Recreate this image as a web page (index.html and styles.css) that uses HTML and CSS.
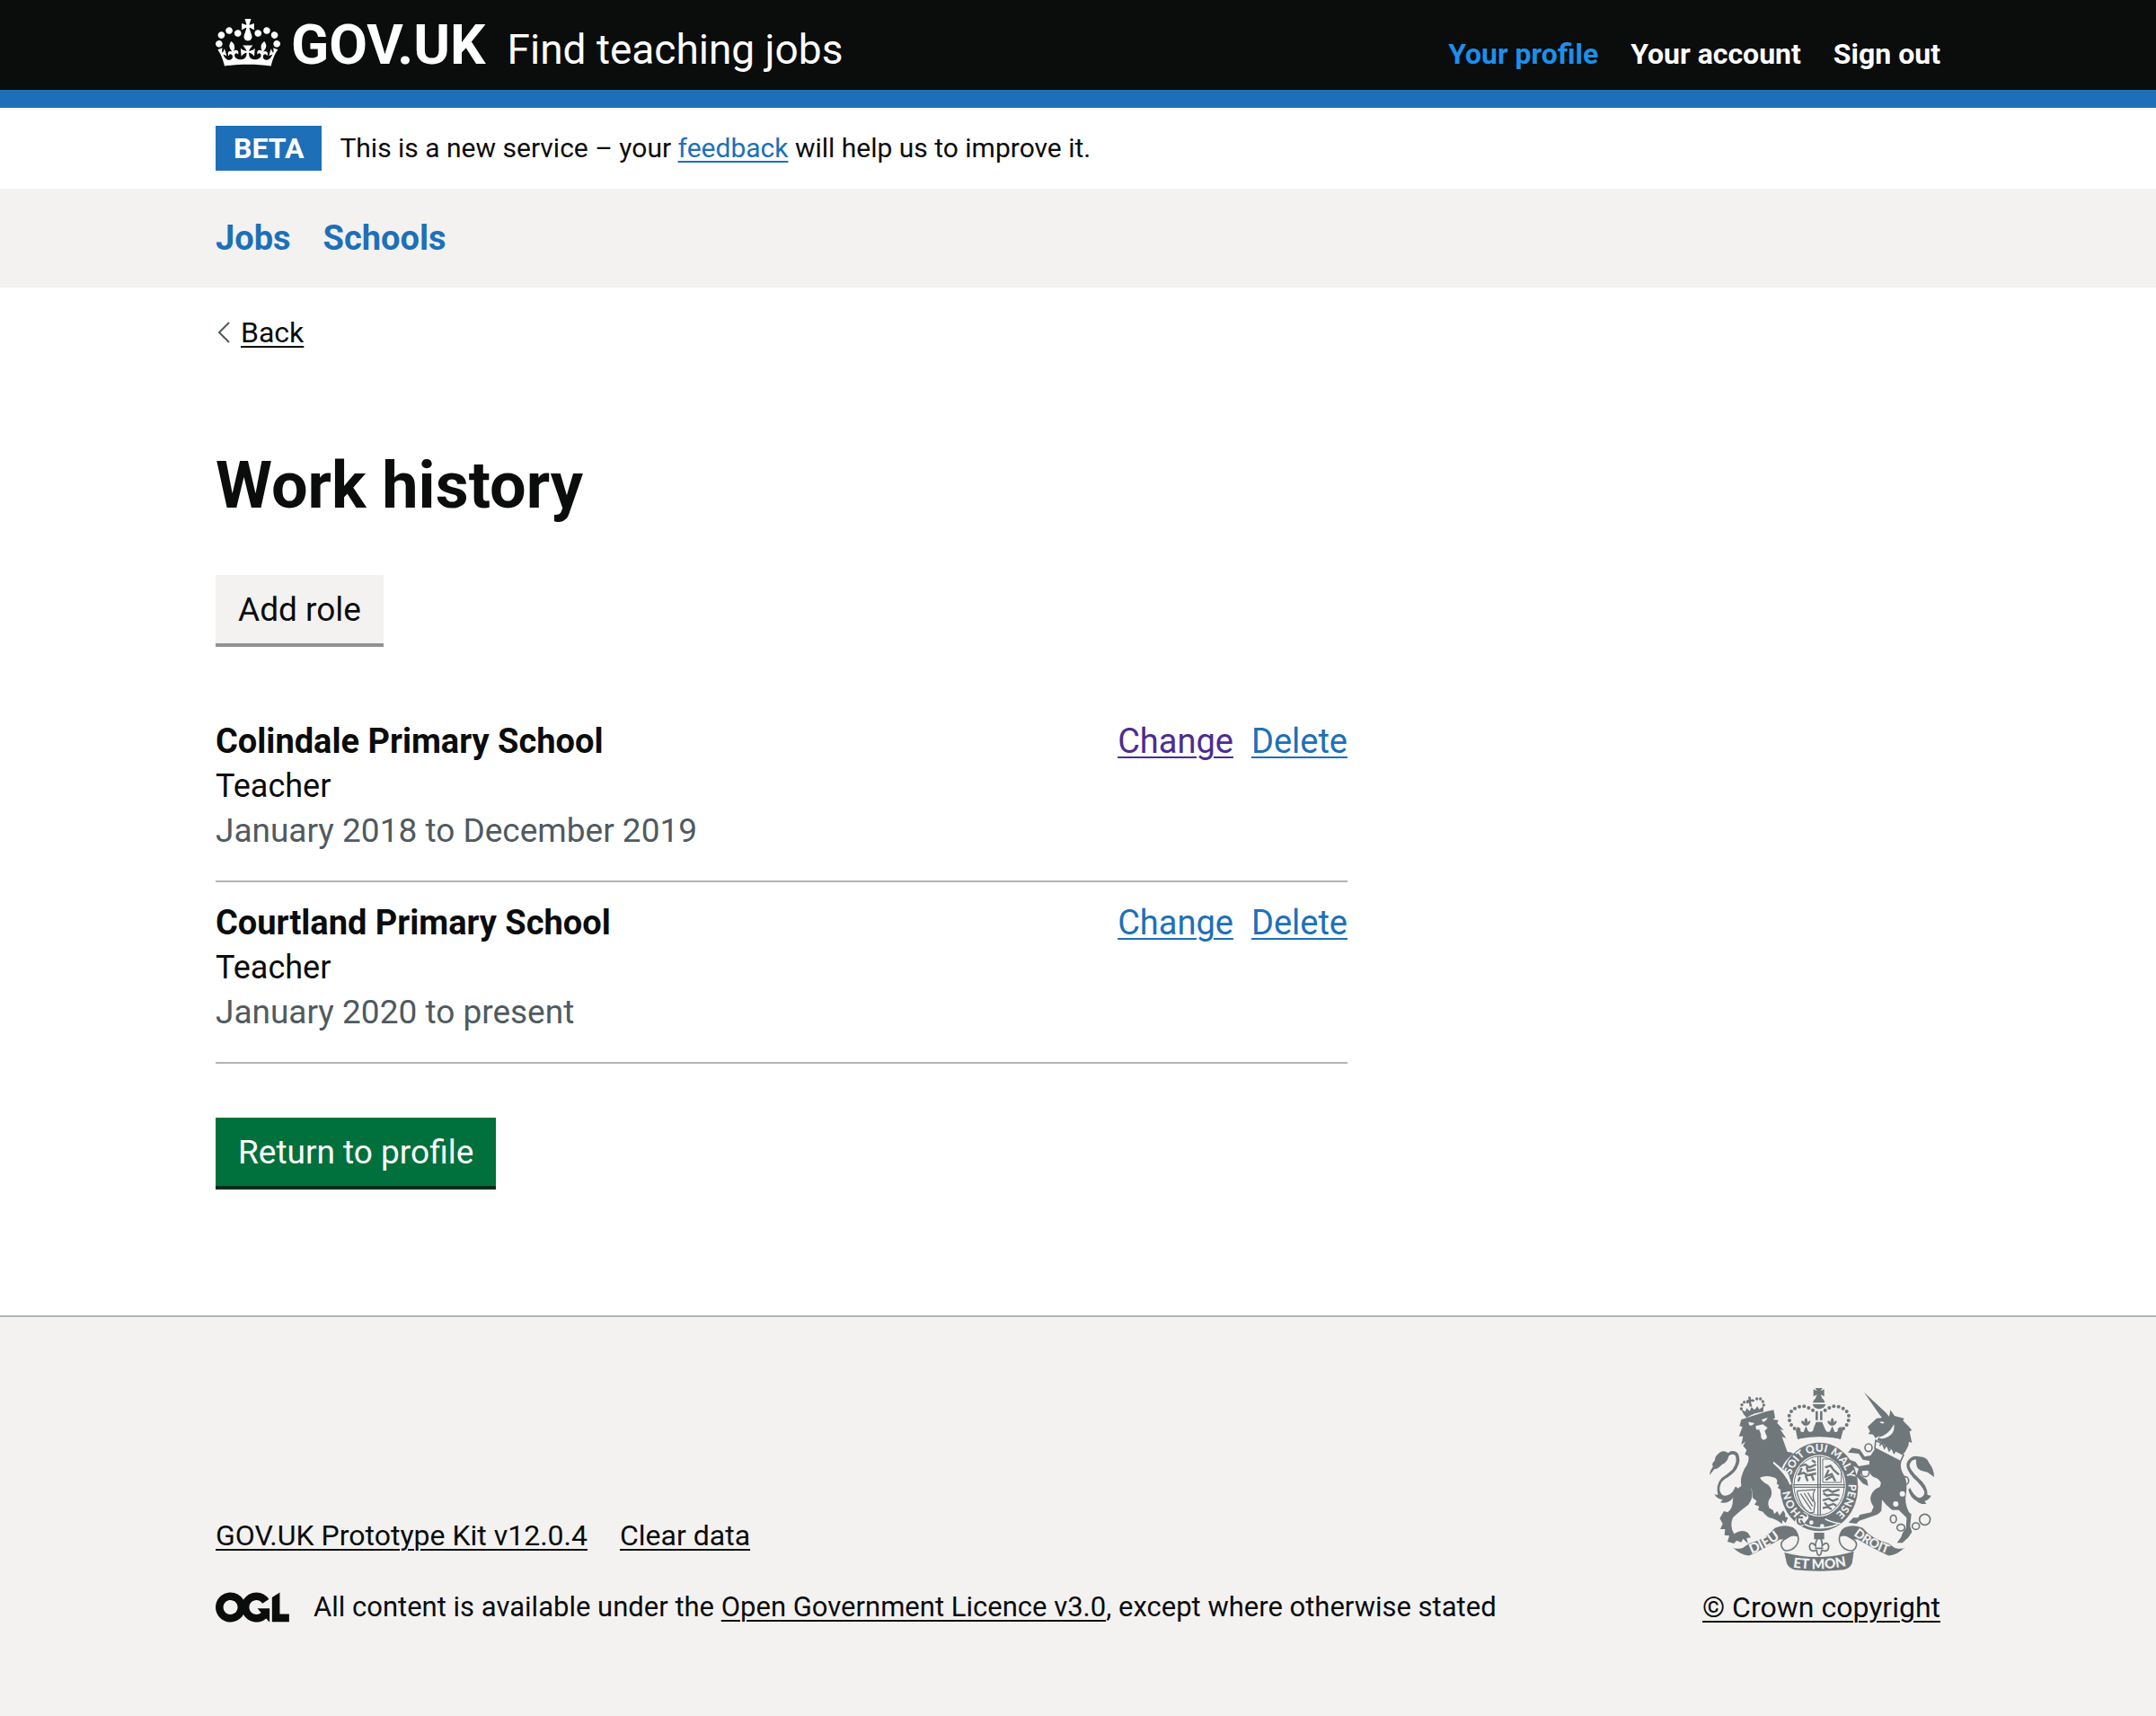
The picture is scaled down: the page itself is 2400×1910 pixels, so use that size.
FILE: index.html
```html
<!DOCTYPE html>
<html lang="en">
<head>
<meta charset="utf-8">
<meta name="viewport" content="width=device-width, initial-scale=1">
<title>Work history - Find teaching jobs - GOV.UK</title>
<link rel="stylesheet" href="styles.css">
</head>
<body>
<header class="header">
  <div class="container header-row">
    <div class="brand">
      <a class="logo" href="#">
        <svg class="crown" viewBox="0 0 132 97" aria-hidden="true"><path fill="currentColor" fill-rule="evenodd" d="M25 30.2c3.5 1.5 7.7-.2 9.1-3.7 1.5-3.6-.2-7.8-3.9-9.2-3.6-1.4-7.6.3-9.1 3.9-1.4 3.5.3 7.5 3.9 9zM9 39.5c3.6 1.5 7.8-.2 9.2-3.7 1.5-3.6-.2-7.8-3.9-9.1-3.6-1.5-7.6.2-9.1 3.8-1.4 3.5.3 7.5 3.8 9zM4.4 57.2c3.5 1.5 7.7-.2 9.1-3.8 1.5-3.6-.2-7.7-3.9-9.1-3.5-1.5-7.6.3-9.1 3.8-1.4 3.5.3 7.6 3.9 9.1zm38.3-21.4c3.5 1.5 7.7-.2 9.1-3.8 1.5-3.6-.2-7.7-3.9-9.1-3.6-1.5-7.6.3-9.1 3.8-1.3 3.6.4 7.7 3.9 9.1zm64.4-5.6c-3.6 1.5-7.8-.2-9.1-3.7-1.5-3.6.2-7.8 3.8-9.2 3.6-1.4 7.7.3 9.2 3.9 1.3 3.5-.4 7.5-3.9 9zm15.9 9.3c-3.6 1.5-7.7-.2-9.1-3.7-1.5-3.6.2-7.8 3.7-9.1 3.6-1.5 7.7.2 9.2 3.8 1.5 3.5-.3 7.5-3.8 9zm4.7 17.7c-3.6 1.5-7.8-.2-9.2-3.8-1.5-3.6.2-7.7 3.9-9.1 3.6-1.5 7.7.3 9.2 3.8 1.3 3.5-.4 7.6-3.9 9.1zM89.3 35.8c-3.6 1.5-7.8-.2-9.2-3.8-1.4-3.6.2-7.7 3.9-9.1 3.6-1.5 7.7.3 9.2 3.8 1.4 3.6-.3 7.7-3.9 9.1zM69.7 17.7l8.9 4.7V9.3l-8.9 2.8c-.2-.3-.5-.6-.9-.9L72.4 0H59.6l3.5 11.2c-.3.3-.6.5-.9.9l-8.8-2.8v13.1l8.8-4.7c.3.3.6.7.9.9l-5 15.4v.1c-.2.8-.4 1.6-.4 2.4 0 4.1 3.1 7.5 7 8.1h.2c.3 0 .7.1 1 .1.4 0 .7 0 1-.1h.2c4-.6 7.1-4.1 7.1-8.1 0-.8-.1-1.7-.4-2.4V34l-5.1-15.4c.4-.2.7-.6 1-.9zM66 92.8c16.9 0 32.8 1.1 47.1 3.2 4-16.9 8.9-26.7 14-33.5l-9.6-3.4c1 4.9 1.1 7.2 0 10.2-1.5-1.4-3-4.3-4.2-8.7L108.6 76c2.8-2 5-3.2 7.5-3.3-4.4 9.4-10 11.9-13.6 11.2-4.3-.8-6.3-4.6-5.6-7.9 1-4.7 5.7-5.9 8-.5 4.3-8.7-3-11.4-7.6-8.8 7.1-7.2 7.9-13.5 2.1-21.1-8 6.1-8.1 12.3-4.5 20.8-4.7-5.4-12.1-2.5-9.5 6.2 3.4-5.2 7.9-2 7.2 3.1-.6 4.3-6.4 7.8-13.5 7.2-10.3-.9-10.9-8-11.2-13.8 2.5-.5 7.1 1.8 11 7.3L80.2 60c-4.1 4.4-8 5.3-12.3 5.4 1.4-4.4 8-11.6 8-11.6H55.5s6.4 7.2 7.9 11.6c-4.2-.1-8-1-12.3-5.4l1.4 16.4c3.9-5.5 8.5-7.7 10.9-7.3-.3 5.8-.9 12.8-11.1 13.8-7.2.6-12.9-2.9-13.5-7.2-.7-5 3.8-8.3 7.1-3.1 2.7-8.7-4.6-11.6-9.4-6.2 3.7-8.5 3.6-14.7-4.6-20.8-5.8 7.6-5 13.9 2.2 21.1-4.7-2.6-11.9.1-7.7 8.8 2.3-5.5 7.1-4.2 8.1.5.7 3.3-1.3 7.1-5.7 7.9-3.5.7-9-1.8-13.5-11.2 2.5.1 4.7 1.3 7.5 3.3l-4.7-15.4c-1.2 4.4-2.7 7.2-4.3 8.7-1.1-3-.9-5.3 0-10.2l-9.5 3.4c5 6.9 9.9 16.7 14 33.5 14.8-2.1 30.8-3.2 47.7-3.2z"/></svg>
        <span class="logo-text">GOV.UK</span>
      </a>
      <a class="service-name" href="#">Find teaching jobs</a>
    </div>
    <nav class="account-nav" aria-label="Account">
      <a class="is-active" href="#">Your profile</a>
      <a href="#">Your account</a>
      <a href="#">Sign out</a>
    </nav>
  </div>
</header>

<div class="container phase">
  <strong class="tag">BETA</strong>
  <span>This is a new service – your <a class="link" href="#">feedback</a> will help us to improve it.</span>
</div>

<nav class="primary-nav" aria-label="Primary">
  <div class="container primary-nav-row">
    <a href="#">Jobs</a>
    <a href="#">Schools</a>
  </div>
</nav>

<div class="container">
  <a class="back" href="#">
    <svg class="chevron" viewBox="0 0 14 24" aria-hidden="true"><path d="M13 1 2 12l11 11" fill="none" stroke="currentColor" stroke-width="2"/></svg>
    <span>Back</span>
  </a>
  <main class="main">
    <h1 class="title">Work history</h1>
    <button class="button button-secondary" type="button">Add role</button>
    <section class="roles" aria-label="Roles">
      <article class="role">
        <div>
          <h2 class="role-school">Colindale Primary School</h2>
          <p>Teacher</p>
          <p class="role-dates">January 2018 to December 2019</p>
        </div>
        <div class="role-actions">
          <a class="link link-visited" href="#">Change</a>
          <a class="link" href="#">Delete</a>
        </div>
      </article>
      <article class="role">
        <div>
          <h2 class="role-school">Courtland Primary School</h2>
          <p>Teacher</p>
          <p class="role-dates">January 2020 to present</p>
        </div>
        <div class="role-actions">
          <a class="link" href="#">Change</a>
          <a class="link" href="#">Delete</a>
        </div>
      </article>
    </section>
    <button class="button" type="button">Return to profile</button>
  </main>
</div>

<footer class="footer">
  <div class="container footer-row">
    <div class="footer-meta">
      <div class="footer-links">
        <a href="#">GOV.UK Prototype Kit v12.0.4</a>
        <a href="#">Clear data</a>
      </div>
      <div class="licence">
        <svg class="ogl" viewBox="0 0 484 196" role="img" aria-label="Open Government Licence"><path fill="currentColor" d="M421.500 142.800V.1l-50.700 32.300v161.100h112.400v-50.700zm-122.300-9.600A47.120 47.120 0 0 1 221 97.800c0-26 21.100-47.100 47.100-47.100 16.700 0 31.400 8.700 39.700 21.800l42.700-27.200A97.630 97.630 0 0 0 268.100 0c-36.500 0-68.300 20.100-85.100 49.700A98 98 0 0 0 97.800 0C43.900 0 0 43.900 0 97.800s43.900 97.800 97.800 97.800c36.500 0 68.300-20.100 85.100-49.700a97.760 97.760 0 0 0 149.600 25.400l19.400 22.200h3v-87.800h-80l24.300 27.500zM97.800 145c-26 0-47.100-21.100-47.100-47.100s21.100-47.100 47.100-47.100 47.100 21.100 47.100 47.100S123.800 145 97.800 145"/></svg>
        <span>All content is available under the <a href="#">Open Government Licence v3.0</a>, except where otherwise stated</span>
      </div>
    </div>
    <a class="copyright" href="#">
      <svg class="crest" viewBox="72 76 750 618" aria-hidden="true">
        <defs>
          <path id="garter" d="M438 519A98 114 0 0 1 438 291A98 114 0 0 1 438 519"/>
          <path id="scroll-left" d="M212 633Q268 612 318 571"/>
          <path id="scroll-mid" d="M350 677Q438 691 528 673"/>
          <path id="scroll-right" d="M552 569Q604 612 672 634"/>
        </defs>
        <g fill="currentColor">
          <!-- lion tail -->
          <path d="M72 370Q74 352 84 340Q76 336 90 320Q88 308 108 293Q122 286 134 296Q148 282 166 296Q180 320 162 350Q150 368 124 382Q104 396 106 420Q112 444 134 436Q150 430 158 408L166 412Q162 438 146 450Q132 466 108 461L116 452Q98 450 88 434L100 436Q92 402 112 380Q132 366 148 352Q168 324 158 304Q146 296 136 306Q132 326 114 334Q100 350 88 350Z"/>
          <!-- lion body -->
          <path d="M178 184L262 157L286 152L291 178L284 184L302 186L298 196L320 220L308 217L328 246L314 242L332 292Q345 292 352 298Q322 322 314 345Q340 372 349 404L349 436L340 430L334 440L326 432L312 436L318 424L300 412L304 404L296 398Q302 384 290 378Q262 368 240 378Q248 392 268 402Q286 420 276 444Q262 458 272 480L284 486L288 500L298 490L306 504L318 488Q328 500 324 508L334 512L326 530L316 520L314 532L300 522L282 514Q262 510 250 492L234 486L238 474L222 468L230 456L216 446Q216 420 210 412Q222 442 202 468Q160 500 150 512Q138 540 154 566Q180 548 200 562L210 578L196 580L200 598L184 582L178 594L162 588L154 598L132 592L138 572L122 570L124 550L108 550L116 532L106 514L120 490L132 494Q150 482 150 450Q154 420 178 406Q172 380 190 346Q206 324 202 306L190 300L196 286L184 272L192 258L178 268L184 240L170 240L182 208L172 206Z"/>
          <!-- lion crown -->
          <path d="M186 167L178 150L192 158L196 146L206 156L212 142L222 152L232 140L238 150L252 140L252 158Q220 162 196 178Z"/>
          <circle cx="178" cy="148" r="5"/><circle cx="180" cy="135" r="5"/><circle cx="188" cy="126" r="5"/><circle cx="199" cy="127" r="4"/><circle cx="218" cy="121" r="4"/><circle cx="230" cy="115" r="5"/><circle cx="242" cy="115" r="5"/><circle cx="250" cy="124" r="5"/><circle cx="253" cy="136" r="5"/>
          <path d="M201 107l9 2 0 8 8-1-2 9-6-1 4 16-8 2-2-15-8 1-1-8 8-3Z"/>
          <!-- centre crown -->
          <path d="M425 79h24l-6 10 12-6v24l-12-6 6 14h-24l6-14-12 6V83l12 6ZM437 110q18 2 20 18h-40q4-16 20-18ZM416 133h44q-4 14-22 16-18-2-22-16ZM426 156h8v30h-8zM441 156h8v30h-8zM360 220L366 208L376 214Q372 228 386 226L394 206L402 224Q418 230 420 212L424 202L428 192H448L452 202L456 212Q462 230 474 224L482 206L490 226Q504 228 500 214L510 208L518 220L510 250Q438 236 366 250Z"/>
          <path d="M388 204q-14-10-8-16 8 0 10 8-4-10 4-18 8 8 4 18 4-8 10-8 4 8-10 16ZM476 204q-14-10-8-16 8 0 10 8-4-10 4-18 8 8 4 18 4-8 10-8 4 8-10 16Z"/>
          <g id="pearls"><circle cx="356" cy="214" r="6"/><circle cx="345" cy="202" r="6"/><circle cx="339" cy="187" r="6"/><circle cx="338" cy="171" r="6"/><circle cx="345" cy="157" r="6"/><circle cx="357" cy="147" r="6"/><circle cx="372" cy="141" r="6"/><circle cx="388" cy="140" r="6"/><circle cx="403" cy="145" r="6"/><circle cx="417" cy="153" r="6"/></g>
          <use href="#pearls" transform="matrix(-1 0 0 1 875 0)"/>
          <!-- unicorn -->
          <path d="M588 93L660 160L672 174L676 152L690 172L722 180L718 188L738 208L748 220L740 224L748 262L738 258L736 272L724 294L716 300L632 252L640 238L626 246L618 234L602 232L608 224L600 208L630 180L648 178L640 168Z"/>
          <path d="M626 280L712 326Q706 350 724 374Q734 400 728 434Q722 462 738 494L746 500L742 540L748 560L736 578L716 596H698L712 576Q718 556 728 548L730 512L704 486L682 486Q660 470 648 452L646 488Q640 500 624 504L572 522L562 532L536 528L552 512L568 512L574 502L612 494L620 476Q604 452 612 436Q620 416 640 410Q652 392 630 380Q606 372 606 354L580 356L576 370L598 386L602 406L584 398L562 372L570 348L548 336L540 318L560 326L570 340L606 334L606 322L584 318L570 298L534 294L548 278L574 284L590 308L610 304Z"/>
          <!-- unicorn tail -->
          <path d="M822 376Q822 350 806 330Q798 308 772 308Q742 300 730 332Q728 352 752 378Q782 404 790 426Q790 442 772 446Q754 440 742 412L736 418Q742 446 764 456Q774 468 796 466L790 456Q806 452 812 438L800 436Q800 404 770 380Q738 348 740 336Q746 316 762 318Q760 348 778 354L800 360Z"/>
          <!-- garter -->
          <ellipse cx="438" cy="409" rx="130" ry="148"/>
          <!-- motto scroll -->
          <path d="M148 610Q160 620 184 612L204 598Q262 582 290 546Q320 532 350 544Q368 554 370 578Q350 566 334 580Q324 586 308 584Q254 616 206 638Q180 640 148 610ZM726 610Q714 620 690 612L670 598Q612 582 584 546Q554 532 524 544Q506 554 504 578Q524 566 540 580Q550 586 566 584Q620 616 668 638Q694 640 726 610ZM322 628Q436 660 554 624L548 664Q540 682 520 686Q438 694 356 686Q336 680 330 664Z"/>
          <path d="M421 562h34v22h-34z"/>
        </g>
        <g fill="none" stroke="currentColor" stroke-width="5">
          <path d="M330 580Q308 590 312 606Q320 632 350 616Q372 600 368 576M544 580Q566 590 562 606Q554 632 524 616Q502 600 506 576"/>
          <path d="M431 620Q406 630 406 606Q412 588 426 606Q426 588 438 574Q450 588 448 606Q464 588 470 606Q470 630 445 620M424 614h28M430 620q0 16 8 18 8-2 8-18"/>
          <ellipse cx="603" cy="278" rx="12" ry="13"/><ellipse cx="592" cy="360" rx="13" ry="15"/><ellipse cx="726" cy="388" rx="11" ry="13"/><ellipse cx="686" cy="516" rx="10" ry="13"/><ellipse cx="711" cy="545" rx="13" ry="11"/><ellipse cx="761" cy="540" rx="12" ry="11"/><circle cx="791" cy="518" r="18"/>
        </g>
        <g class="crest-knockout">
          <ellipse cx="438" cy="405" rx="89" ry="103"/>
          <path d="M366 266Q364 250 376 248Q438 236 500 248Q514 252 508 278Q500 268 476 262Q438 250 400 262Q376 268 370 280Z"/>
          <path d="M202 192L222 196Q214 208 204 202ZM246 184L266 178Q260 192 250 192ZM226 206L250 200L266 212L256 222L264 242Q262 252 252 252Q242 248 244 234L238 218L228 218ZM640 192q12-4 16 4-10 4-16-4ZM688 200Q692 228 668 242Q648 252 636 244Q670 236 688 200Z"/>
          <circle cx="716" cy="432" r="9"/><circle cx="694" cy="466" r="9"/><circle cx="412" cy="528" r="7"/><circle cx="448" cy="540" r="7"/>
          <path d="M286 324L336 366L346 400L340 402Q326 366 284 330Z"/>
        </g>
        <g fill="none" stroke="currentColor">
          <path stroke-width="5" d="M627 254L720 302L710 324L624 280ZM640 272l8-12 8 20 8-12 8 20 8-12 8 20 8-12"/>
          <ellipse cx="438" cy="405" rx="84" ry="98" stroke-width="3"/>
          <path stroke-width="4" d="M434 306V505M442 306V505M352 402H524M352 410H524"/>
          <!-- quartered shield -->
          <path stroke-width="7" d="M374 340l18-6 14 10 22-10M380 346l-8 18M396 342l4 14 26-6M366 368l20-6 14 8 28-6M374 376l-6 14M392 370l8 20M412 366l8 22M414 320l12 8M450 424l18-6 14 8 24-8M452 430l12 8 20-4 22 4M450 454l20-6 14 8 18-8M456 462l10 10 20-6 10 6M450 480l16-4 14 8M458 344l18-6 10 14 18 16M470 352l-10 22 20-8 12 24M460 386l24-14"/>
          <path stroke-width="3" d="M450 316H482L512 350V394H450Z"/>
          <path stroke-width="4" d="M366 422L424 418Q412 440 424 464L420 494L406 496Q378 480 364 428ZM376 432L412 486M388 430L416 474M400 428L418 458"/>
        </g>
        <!-- garter buckle -->
        <path class="crest-knockout" d="M356 526Q364 498 388 494Q406 502 402 514L392 526L384 540Q364 542 356 526Z"/>
        <path fill="none" stroke="currentColor" stroke-width="7" d="M396 508Q380 488 366 508Q376 514 384 510M366 510Q362 540 384 532L376 520"/>
        <path fill="none" class="crest-line" stroke-width="5" d="M458 516Q474 526 510 532M390 534Q440 558 500 534"/>
        <g class="crest-text">
          <text><textPath href="#garter" startOffset="66">HON</textPath></text>
          <text><textPath href="#garter" startOffset="202">SOIT</textPath></text>
          <text><textPath href="#garter" startOffset="291">QUI</textPath></text>
          <text><textPath href="#garter" startOffset="370">MAL</textPath></text>
          <text><textPath href="#garter" startOffset="452">Y</textPath></text>
          <text><textPath href="#garter" startOffset="494">PENSE</textPath></text>
        </g>
        <g class="crest-text crest-motto">
          <text><textPath href="#scroll-left">DIEU</textPath></text>
          <text><textPath href="#scroll-mid">ET MON</textPath></text>
          <text class="crest-droit"><textPath href="#scroll-right">DROIT</textPath></text>
        </g>
      </svg>
      <span class="copyright-text">© Crown copyright</span>
    </a>
  </div>
</footer>
</body>
</html>
```

FILE: styles.css
```css
* { box-sizing: border-box; }

html { background: #f3f2f1; }

body {
  margin: 0;
  background: #fff;
  color: #0b0c0c;
  font-family: Roboto, "Liberation Sans", sans-serif;
  font-size: 36px;
  line-height: 50px;
}

h1, h2, p { margin: 0; }

a {
  color: inherit;
  text-decoration-thickness: 2px;
  text-underline-offset: 4px;
}

.container {
  width: 80%;
  max-width: 1920px;
  margin: 0 auto;
}

.link { color: #1d70b8; }
.link-visited { color: #4c2c92; }

/* Header */
.header {
  background: #0b0c0c;
  color: #fff;
  border-bottom: 20px solid #1d70b8;
}

.header-row {
  display: flex;
  justify-content: space-between;
  align-items: baseline;
  padding: 14px 0;
}

.header a { text-decoration: none; }

.brand {
  display: flex;
  align-items: baseline;
  gap: 24px;
}

.logo {
  display: flex;
  gap: 12px;
  font-size: 62px;
  font-weight: 700;
  line-height: 72px;
}

.logo-text { align-self: baseline; }

.crown {
  width: 72px;
  height: 53px;
  margin-top: 7px;
}

.service-name { font-size: 46px; }

.account-nav {
  display: flex;
  gap: 36px;
  font-size: 32px;
  font-weight: 700;
}

.account-nav .is-active { color: #1d8feb; }

/* Phase banner */
.phase {
  display: flex;
  align-items: center;
  gap: 20px;
  padding: 20px 0;
  font-size: 30px;
}

.tag {
  padding: 0 20px;
  background: #1d70b8;
  color: #fff;
  font-size: 32px;
}

/* Primary navigation */
.primary-nav { background: #f3f2f1; }

.primary-nav-row {
  display: flex;
  gap: 36px;
  padding: 30px 0;
  color: #1d70b8;
  font-size: 38px;
  font-weight: 700;
}

.primary-nav a { text-decoration: none; }

/* Page */
.back {
  display: inline-flex;
  align-items: center;
  gap: 12px;
  margin-top: 25px;
  padding-left: 2px;
  font-size: 32px;
}

.chevron {
  width: 14px;
  height: 24px;
  color: #505a5f;
}

.main {
  width: 65.625%;
  padding: 96px 0 144px;
}

.title {
  margin-bottom: 49px;
  font-size: 72px;
  line-height: 100px;
}

.button {
  display: block;
  padding: 14px 25px 12px;
  border: 0;
  background: #00703c;
  box-shadow: 0 4px 0 #002d18;
  color: #fff;
  font: inherit;
  font-size: 37px;
}

.button-secondary {
  background: #f3f2f1;
  box-shadow: 0 4px 0 #929191;
  color: #0b0c0c;
}

.roles { margin: 64px 0 60px; }

.role {
  display: flex;
  justify-content: space-between;
  padding: 20px 0 30px;
  border-bottom: 2px solid #b1b4b6;
}

.role-school {
  font-size: 38px;
  line-height: 50px;
}

.role-dates {
  color: #505a5f;
  font-size: 37px;
}

.role-actions {
  display: flex;
  gap: 20px;
  font-size: 38px;
}

/* Footer */
.footer {
  padding: 78px 0 100px;
  border-top: 2px solid #b1b4b6;
  background: #f3f2f1;
  font-size: 32px;
}

.footer-row {
  display: flex;
  justify-content: space-between;
  align-items: flex-end;
}

.footer-meta {
  display: grid;
  gap: 30px;
}

.footer-links {
  display: flex;
  gap: 36px;
}

.licence {
  display: flex;
  align-items: center;
  gap: 27px;
  font-size: 31px;
}

.ogl {
  width: 82px;
  height: 34px;
}

.copyright {
  display: flex;
  flex-direction: column;
  align-items: center;
  gap: 14px;
  text-decoration: none;
}

.copyright-text {
  text-decoration: underline;
  text-decoration-thickness: 2px;
  text-underline-offset: 4px;
}

.crest {
  width: 250px;
  height: 206px;
  color: #6f777b;
}

.crest-knockout { fill: #f3f2f1; }
.crest-line { stroke: #f3f2f1; }

.crest-text {
  fill: #f3f2f1;
  font-family: Lato, sans-serif;
  font-size: 36px;
  font-weight: 900;
}

.crest-motto { font-size: 46px; }
.crest-droit { font-size: 42px; }
```
